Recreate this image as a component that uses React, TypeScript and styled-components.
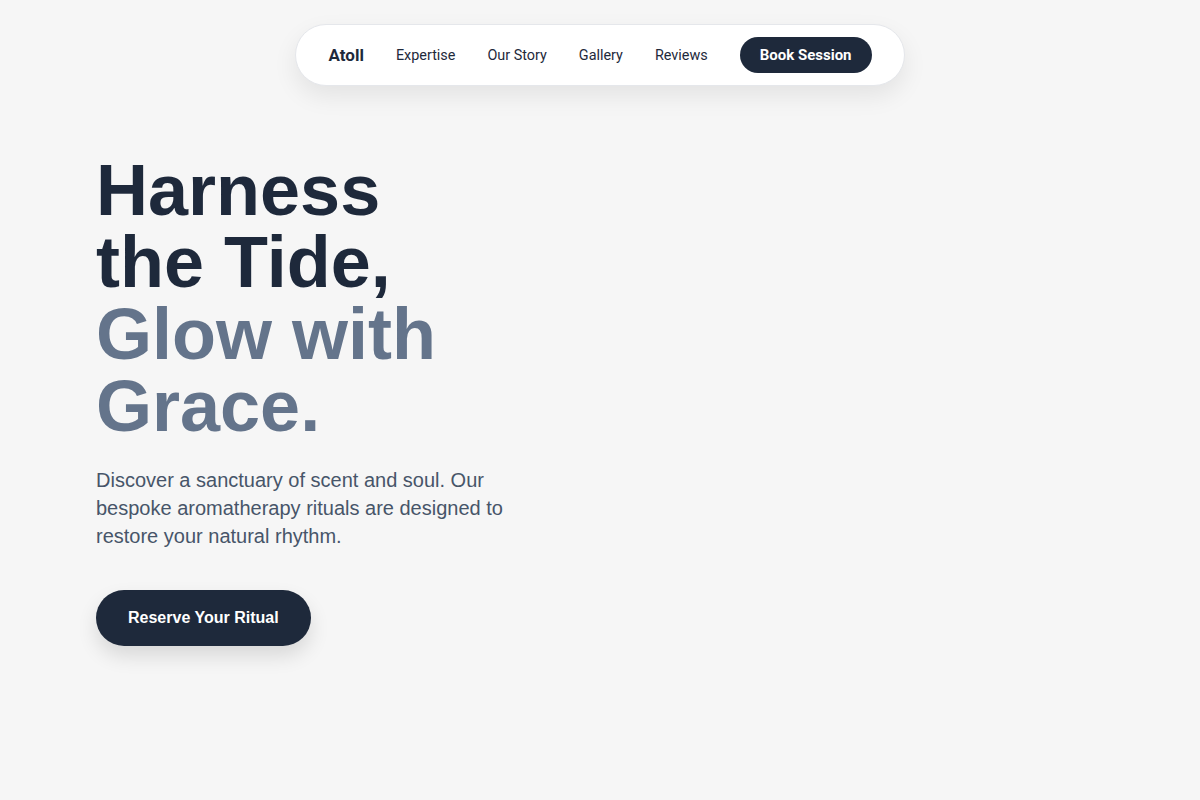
import styled, { createGlobalStyle } from "styled-components";

const GlobalStyle = createGlobalStyle`
  * { box-sizing: border-box; }
  body {
    margin: 0;
    background: #f6f6f6;
    font-family: "Liberation Sans", Arial, sans-serif;
    color: #1e293b;
  }
`;

const Page = styled.div`
  min-height: 800px;
  padding-top: 24px;
`;

const NavWrap = styled.div`
  display: flex;
  justify-content: center;
`;

const Nav = styled.nav`
  display: flex;
  align-items: center;
  gap: 32px;
  padding: 12px 32px;
  background: #fff;
  border: 1px solid #e5e7eb;
  border-radius: 999px;
  box-shadow: 0 10px 25px rgba(0, 0, 0, 0.08);
  font-family: Roboto, "Liberation Sans", sans-serif;
`;

const Brand = styled.span`
  font-size: 17px;
  font-weight: 700;
  color: #1e293b;
`;

const NavLink = styled.a`
  font-size: 14.4px;
  color: #1e293b;
  text-decoration: none;
`;

const NavButton = styled.button`
  height: 36px;
  padding: 0 20px;
  border: none;
  border-radius: 999px;
  background: #1e293b;
  color: #fff;
  font-family: Roboto, "Liberation Sans", sans-serif;
  font-size: 15px;
  font-weight: 700;
`;

const Hero = styled.section`
  padding: 68px 96px 0;
`;

const Heading = styled.h1`
  margin: 0;
  font-size: 72px;
  line-height: 1;
  font-weight: 700;
  color: #1e293b;
`;

const Muted = styled.span`
  color: #64748b;
`;

const Lead = styled.p`
  margin: 24px 0 0;
  max-width: 440px;
  font-size: 20px;
  line-height: 28px;
  color: #475569;
`;

const Cta = styled.button`
  margin-top: 40px;
  height: 56px;
  padding: 0 32px;
  border: none;
  border-radius: 999px;
  background: #1e293b;
  color: #fff;
  font-family: "Liberation Sans", Arial, sans-serif;
  font-size: 16px;
  font-weight: 700;
  box-shadow: 0 10px 20px rgba(0, 0, 0, 0.12);
`;

export default function App() {
  return (
    <Page>
      <GlobalStyle />
      <NavWrap>
        <Nav>
          <Brand>Atoll</Brand>
          <NavLink href="#">Expertise</NavLink>
          <NavLink href="#">Our Story</NavLink>
          <NavLink href="#">Gallery</NavLink>
          <NavLink href="#">Reviews</NavLink>
          <NavButton>Book Session</NavButton>
        </Nav>
      </NavWrap>
      <Hero>
        <Heading>
          Harness
          <br />
          the Tide,
          <br />
          <Muted>
            Glow with
            <br />
            Grace.
          </Muted>
        </Heading>
        <Lead>
          Discover a sanctuary of scent and soul. Our bespoke aromatherapy
          rituals are designed to restore your natural rhythm.
        </Lead>
        <Cta>Reserve Your Ritual</Cta>
      </Hero>
    </Page>
  );
}
